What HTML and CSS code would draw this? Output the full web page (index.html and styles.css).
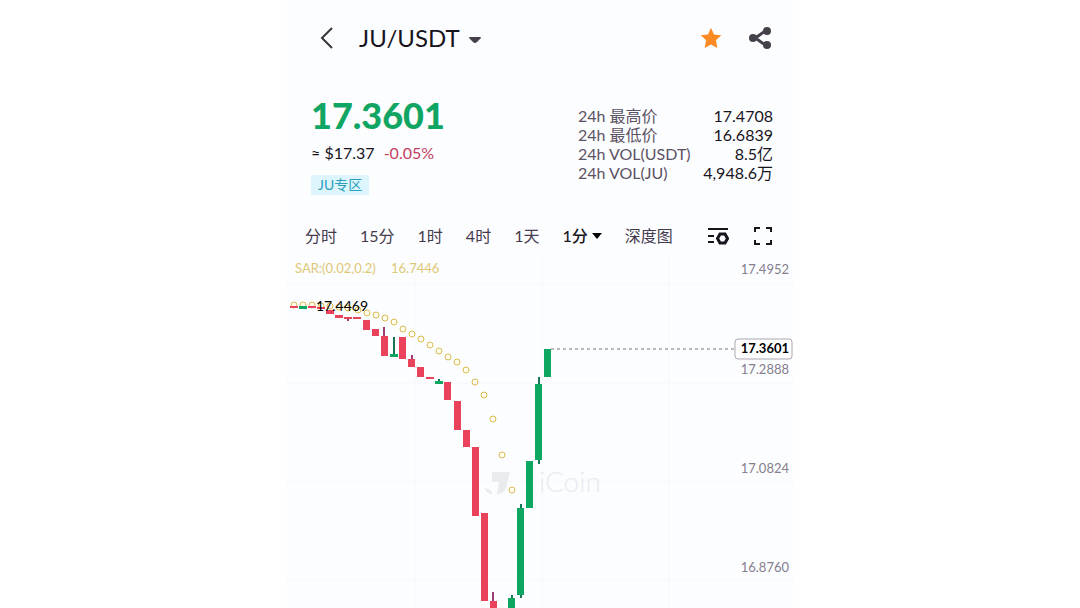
FILE: index.html
```html
<!DOCTYPE html>
<html lang="zh-CN">
<head>
    <meta charset="UTF-8">
    <meta name="viewport" content="width=device-width, initial-scale=1">
    <title>JU/USDT</title>
    <link rel="stylesheet" href="styles.css">
</head>
<body>
    <main class="app">
        <header class="topbar">
            <button class="icon-btn" type="button" aria-label="返回">
                <svg width="16" height="24" viewBox="0 0 16 24"><path class="stroke" d="M13 2 3 12l10 10"/></svg>
            </button>
            <button class="pair" type="button">JU/USDT
                <svg width="12" height="8" viewBox="0 0 12 8"><path class="soft" d="M0 2Q0 1 1 1h10q1 0 1 1L8 6Q6 8 4 6Z"/></svg>
            </button>
            <button class="icon-btn star" type="button" aria-label="收藏">
                <svg width="22" height="22" viewBox="0 0 22 22"><path d="m11 .8 3 6.700 7.300.8-5.400 4.900 1.500 7.800-6.400-3.500L4.600 21l1.500-7.800L.7 8.300 8 7.500Z"/></svg>
            </button>
            <button class="icon-btn" type="button" aria-label="分享">
                <svg width="24" height="24" viewBox="0 0 24 24">
                    <path class="share-line" d="M18.500 5C13 6 11 12 5 12c6 0 8 6 13.500 7"/>
                    <g class="soft"><circle cx="5" cy="12" r="4"/><circle cx="19" cy="5" r="4"/><circle cx="19" cy="19" r="4"/></g>
                </svg>
            </button>
        </header>

        <section class="summary">
            <div class="quote">
                <div class="price">17.3601</div>
                <div class="fiat">≈ $17.37 <span class="change">-0.05%</span></div>
                <a class="zone" href="#zone">JU专区</a>
            </div>
            <table class="stats">
                <tr><th scope="row">24h 最高价</th><td>17.4708</td></tr>
                <tr><th scope="row">24h 最低价</th><td>16.6839</td></tr>
                <tr><th scope="row">24h VOL(USDT)</th><td>8.5亿</td></tr>
                <tr><th scope="row">24h VOL(JU)</th><td>4,948.6万</td></tr>
            </table>
        </section>

        <nav class="periods">
            <button type="button">分时</button>
            <button type="button">15分</button>
            <button type="button">1时</button>
            <button type="button">4时</button>
            <button type="button">1天</button>
            <button type="button" class="active">1分
                <svg width="10" height="6" viewBox="0 0 10 6"><path d="M0 0h10L5 6Z"/></svg>
            </button>
            <button type="button">深度图</button>
            <span class="tools">
                <button type="button" aria-label="指标设置">
                    <svg width="22" height="20" viewBox="0 0 22 20">
                        <path class="tool-line" d="M1 3h20M1 10h6M1 16h6"/>
                        <path class="tool-line hex" d="M13 8h5l2.500 4.500L18 17h-5l-2.500-4.500Z"/>
                    </svg>
                </button>
                <button type="button" aria-label="全屏">
                    <svg width="20" height="20" viewBox="0 0 20 20"><path class="tool-line" d="M2 6V2h5M13 2h5v4M18 14v4h-5M7 18H2v-4"/></svg>
                </button>
            </span>
        </nav>

        <svg class="chart" viewBox="0 0 506 352" role="img" aria-label="K线图">
            <path class="grid" d="M128 0v352M255 0v352M382 0v352M0 28h506M0 127h506M0 225h506M0 324h506"/>

            <!-- watermark -->
            <g class="watermark">
                <path d="M205 216h18l-4 16q-2 6-9 6l2-12h-7ZM198 232q5 0 8 6-6 1-8-6Z"/>
                <text x="252" y="236">iCoin</text>
            </g>

            <!-- parabolic SAR -->
            <g class="sar">
                <circle cx="7" cy="49" r="3"/><circle cx="16" cy="49" r="3"/><circle cx="25" cy="49" r="3"/>
                <circle cx="34" cy="50" r="3"/><circle cx="43" cy="50" r="3"/><circle cx="52" cy="51" r="3"/>
                <circle cx="61" cy="52" r="3"/><circle cx="71" cy="54" r="3"/><circle cx="80" cy="57" r="3"/>
                <circle cx="89" cy="59" r="3"/><circle cx="98" cy="62" r="3"/><circle cx="107" cy="66" r="3"/>
                <circle cx="116" cy="73" r="3"/><circle cx="125" cy="78" r="3"/><circle cx="134" cy="83" r="3"/>
                <circle cx="143" cy="89" r="3"/><circle cx="152" cy="95" r="3"/><circle cx="161" cy="101" r="3"/>
                <circle cx="170" cy="106" r="3"/><circle cx="179" cy="114" r="3"/><circle cx="188" cy="126" r="3"/>
                <circle cx="197" cy="139" r="3"/><circle cx="206" cy="163" r="3"/><circle cx="215" cy="199" r="3"/>
                <circle cx="225" cy="234" r="3"/>
            </g>

            <g class="down">
                <path class="wick" d="M97 71v12M125 99v6M206 336v12M61 62v3"/>
                <rect x="3" y="50" width="8" height="2"/>
                <rect x="21" y="50" width="8" height="2"/>
                <rect x="30" y="51" width="8" height="2"/>
                <rect x="39" y="54" width="8" height="4"/>
                <rect x="48" y="59" width="8" height="3"/>
                <rect x="57" y="61" width="8" height="2"/>
                <rect x="66" y="61" width="8" height="2"/>
                <rect x="76" y="64" width="7" height="10"/>
                <rect x="85" y="73" width="7" height="7"/>
                <rect x="94" y="80" width="7" height="20"/>
                <rect x="112" y="81" width="7" height="22"/>
                <rect x="121" y="103" width="7" height="8"/>
                <rect x="130" y="111" width="7" height="10"/>
                <rect x="139" y="121" width="8" height="2"/>
                <rect x="157" y="126" width="7" height="18"/>
                <rect x="167" y="145" width="7" height="29"/>
                <rect x="176" y="174" width="7" height="17"/>
                <rect x="185" y="191" width="7" height="69"/>
                <rect x="194" y="257" width="7" height="88"/>
                <rect x="203" y="345" width="7" height="20"/>
            </g>
            <g class="up">
                <path class="wick" d="M107 81v18M152 123v3M225 339v5M234 248v94M252 121v87"/>
                <rect x="12" y="50" width="8" height="3"/>
                <rect x="103" y="98" width="8" height="3"/>
                <rect x="148" y="125" width="8" height="3"/>
                <rect x="221" y="342" width="7" height="20"/>
                <rect x="230" y="252" width="7" height="87"/>
                <rect x="239" y="205" width="7" height="47"/>
                <rect x="248" y="128" width="7" height="76"/>
                <rect x="257" y="93" width="7" height="28"/>
            </g>

            <text class="high" x="29" y="55">17.4469</text>
            <text class="sar-label" x="8" y="17">SAR:(0.02,0.2)</text>
            <text class="sar-label" x="104" y="17">16.7446</text>

            <g class="axis">
                <text x="502" y="18">17.4952</text>
                <text x="502" y="118">17.2888</text>
                <text x="502" y="217">17.0824</text>
                <text x="502" y="316">16.8760</text>
            </g>

            <path class="last-line" d="M264 93h183"/>
            <rect class="last-box" x="448" y="83" width="57" height="20" rx="3"/>
            <text class="last" x="502" y="97">17.3601</text>
        </svg>
    </main>
</body>
</html>
```
FILE: styles.css
```css
* { box-sizing: border-box; }
body { margin: 0; height: 100vh; overflow: hidden; background: #fff; color: #17141d; font-family: Lato, "Noto Sans CJK SC", sans-serif; }
button { padding: 0; border: 0; background: none; color: inherit; font: inherit; cursor: pointer; }
svg { display: block; }

.app { max-width: 506px; margin: 0 auto; background: #fcfdff; }

.topbar { display: flex; align-items: center; padding: 24px 21px 0 32px; }
.icon-btn { display: flex; }
.pair { display: flex; align-items: center; gap: 9px; margin: 0 auto 0 24px; font-size: 24px; line-height: 28px; }
.pair svg { margin-top: 4px; }
.star { margin-right: 26px; fill: #fb8a24; }
.stroke { fill: none; stroke: #38343d; stroke-width: 2; }
.soft { fill: #45414a; }
.share-line { fill: none; stroke: #45414a; stroke-width: 3; }

.summary { display: flex; justify-content: space-between; align-items: flex-start; padding: 43px 20px 0 24px; }
.price { color: #10a563; font-size: 36px; font-weight: 900; line-height: 40px; }
.fiat { margin-top: 6px; font-size: 16px; line-height: 24px; }
.change { margin-left: 5px; color: #c53d62; }
.zone { display: inline-block; margin-top: 10px; padding: 0 7px; background: #ddf5fd; color: #2c9fb8; font-size: 14px; line-height: 20px; text-decoration: none; }
.stats { width: 195px; margin-top: 11px; border-collapse: collapse; font-size: 16px; line-height: 19px; }
.stats th, .stats td { height: 19px; padding: 0; white-space: nowrap; }
.stats th { color: #5c5265; font-weight: 400; text-align: left; }
.stats td { text-align: right; }

.periods { display: flex; align-items: center; gap: 23px; height: 40px; margin-top: 21px; padding: 0 20px 0 18px; color: #453a4e; font-size: 16px; line-height: 24px; white-space: nowrap; }
.active { display: flex; align-items: center; gap: 4px; color: #17141d; font-weight: 500; }
.tools { display: flex; align-items: center; gap: 24px; margin-left: auto; }
.tool-line { fill: none; stroke: #17141d; stroke-width: 2; }
.hex { stroke-width: 3; }

.chart { width: 100%; overflow: hidden; font-size: 13px; }
.grid { fill: none; stroke: #f6f8fc; }
.watermark { fill: #e9ebef; font-size: 28px; font-weight: 300; }
.sar { fill: #fffdf0; stroke: #d9bb4f; }
.sar-label { fill: #dfc875; }
.high { font-size: 14px; }
.down { fill: #e9425a; }
.down .wick { stroke: #9c3d76; stroke-width: 2; }
.up { fill: #0da762; }
.up .wick { stroke: #17765a; stroke-width: 2; }
.axis { fill: #857e8c; text-anchor: end; }
.last-line { stroke: #77747c; stroke-dasharray: 3 3; }
.last-box { fill: #fff; stroke: #aaa7b2; }
.last { font-weight: 700; text-anchor: end; }
```
